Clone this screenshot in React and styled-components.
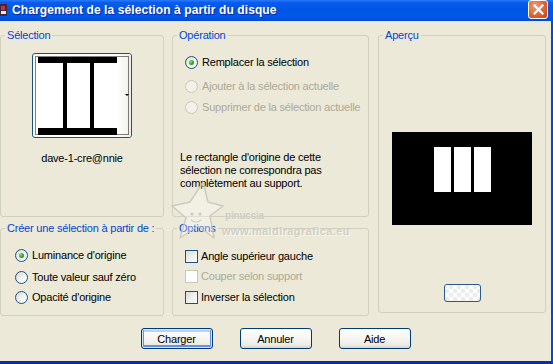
import React from 'react';
import styled, { createGlobalStyle } from 'styled-components';

const Global = createGlobalStyle`
  html, body { margin: 0; padding: 0; width: 553px; height: 364px; overflow: hidden; background: #ECE9D8; }
  body { font-family: "Liberation Sans", Arial, sans-serif; font-size: 11px; letter-spacing: -0.2px; color: #000; }
  #root { width: 553px; height: 364px; }
`;

const Window = styled.div`
  position: relative;
  width: 553px;
  height: 364px;
  display: flex;
  flex-direction: column;
  overflow: hidden;
`;

const TitleBar = styled.div`
  flex: none;
  height: 21px;
  box-sizing: border-box;
  padding: 0 5px 2px 0;
  display: flex;
  align-items: center;
  background: linear-gradient(180deg, #2A7BF8 0%, #0A5CEE 12%, #0054E3 45%, #0058EA 80%, #0047D0 100%);
`;

const TitleIcon = styled.svg`
  flex: none;
  width: 7px;
  height: 12px;
`;

const TitleText = styled.div`
  flex: 1;
  margin-left: 5px;
  color: #fff;
  font-weight: bold;
  font-size: 12px;
  letter-spacing: 0.1px;
  text-shadow: 1px 1px 0 #0A2C9C;
  white-space: nowrap;
`;

const CloseButton = styled.div`
  flex: none;
  width: 20px;
  height: 19px;
  margin-top: -1px;
  box-sizing: border-box;
  border: 1px solid #fff;
  border-radius: 3px;
  background: radial-gradient(circle at 35% 30%, #F29B7C 0%, #E4602F 55%, #C8431A 100%);
  display: flex;
  align-items: center;
  justify-content: center;
`;

const Body = styled.div`
  flex: 1;
  display: flex;
  flex-direction: column;
  background: #ECE9D8;
  border-right: 2px solid #0B45D8;
  border-bottom: 3px solid #0A2DB4;
  padding: 8px 0 0 0;
`;

const Columns = styled.div`
  display: grid;
  grid-template-columns: 164px 197px 169px;
  grid-template-rows: 188px 94px;
  column-gap: 8px;
  row-gap: 5px;
`;

const Group = styled.fieldset`
  margin: 0;
  margin-left: ${p => p.$ml || 0}px;
  margin-bottom: ${p => p.$mb || 0}px;
  padding: 0;
  min-width: 0;
  box-sizing: border-box;
  border: 1px solid #D0D0BF;
  border-radius: 3px;
  grid-column: ${p => p.$col};
  grid-row: ${p => p.$row};
`;

const Legend = styled.legend`
  color: #0046D5;
  line-height: 13px;
  padding: 0 2px;
  margin-left: 4px;
`;

const GroupBody = styled.div`
  display: flex;
  flex-direction: column;
  align-items: ${p => (p.$center ? 'center' : 'flex-start')};
  padding-left: ${p => p.$pl || 0}px;
`;

const Thumb = styled.div`
  margin-top: 11px;
  width: 100px;
  height: 85px;
  box-sizing: border-box;
  border: 1px solid #1C5180;
  border-radius: 3px;
  background: #fff;
  overflow: hidden;
`;

const Caption = styled.div`
  margin-top: 14px;
  line-height: 13px;
`;

const OptionRow = styled.div`
  display: flex;
  align-items: center;
  gap: ${p => p.$gap || 4}px;
  height: 16px;
  margin-top: ${p => p.$mt || 0}px;
  color: ${p => (p.$disabled ? '#ACA899' : '#000')};
  white-space: nowrap;
`;

const Radio = styled.span`
  flex: none;
  width: 13px;
  height: 13px;
  box-sizing: border-box;
  border-radius: 50%;
  border: 1px solid ${p => (p.$disabled ? '#CAC8BB' : '#1C5180')};
  background: ${p => (p.$disabled ? '#F3F1EA' : 'linear-gradient(135deg, #DCD9CD 0%, #F4F3EE 55%, #FFFFFF 100%)')};
  display: flex;
  align-items: center;
  justify-content: center;
  &::after {
    content: '';
    display: ${p => (p.$checked ? 'block' : 'none')};
    width: 5px;
    height: 5px;
    border-radius: 50%;
    background: radial-gradient(circle at 35% 35%, #7EE27E 0%, #21A121 60%, #1A7F1A 100%);
  }
`;

const Checkbox = styled.span`
  flex: none;
  width: 13px;
  height: 13px;
  box-sizing: border-box;
  border: 1px solid ${p => (p.$disabled ? '#CAC8BB' : '#1C5180')};
  background: ${p => (p.$disabled ? '#FFFFFF' : 'linear-gradient(135deg, #DCDCD7 0%, #F2F2EE 60%, #FFFFFF 100%)')};
`;

const Note = styled.p`
  margin: 36px 0 0 7px;
  line-height: 13px;
`;

const Preview = styled.svg`
  display: block;
  margin-top: 90px;
  width: 140px;
  height: 93px;
`;

const SwatchButton = styled.div`
  margin-top: 59px;
  width: 37px;
  height: 18px;
  box-sizing: border-box;
  border: 1px solid #2B5A8A;
  border-radius: 3px;
  background-color: #fff;
  background-image:
    linear-gradient(45deg, #ECECE8 25%, transparent 25%, transparent 75%, #ECECE8 75%),
    linear-gradient(45deg, #ECECE8 25%, transparent 25%, transparent 75%, #ECECE8 75%);
  background-size: 8px 8px;
  background-position: 0 0, 4px 4px;
`;

const ButtonRow = styled.div`
  display: flex;
  justify-content: center;
  gap: 27px;
  margin-top: 12px;
`;

const Button = styled.button`
  width: 72px;
  height: 21px;
  box-sizing: border-box;
  padding: 0;
  border: 1px solid #003C74;
  border-radius: 3px;
  background: linear-gradient(180deg, #FFFFFF 0%, #F6F5F0 50%, #ECEBE4 85%, #D6D0C5 100%);
  font-family: "Liberation Sans", Arial, sans-serif;
  font-size: 11px;
  letter-spacing: -0.2px;
  color: #000;
  box-shadow: ${p => (p.$default ? 'inset 0 0 0 1px #CEE7FF, inset 0 -1px 0 2px #6B8FE0, inset 0 1px 0 2px #B7D2F8' : 'none')};
`;

const Watermark = styled.div`
  position: absolute;
  left: 168px;
  top: 180px;
  width: 180px;
  height: 62px;
  pointer-events: none;
`;

const WmStar = styled.svg`
  position: absolute;
  left: 2px;
  top: 0;
  width: 54px;
  height: 62px;
`;

const WmName = styled.div`
  position: absolute;
  left: 57px;
  top: 30px;
  font-size: 10px;
  font-weight: bold;
  color: rgba(190, 187, 176, 0.75);
  text-shadow: 0 0 1px #F8F7F2;
`;

const WmUrl = styled.div`
  position: absolute;
  left: 54px;
  top: 45px;
  font-size: 11px;
  font-weight: bold;
  letter-spacing: 0.4px;
  color: rgba(196, 193, 182, 0.7);
  text-shadow: 1px 1px 0 rgba(255, 255, 255, 0.6);
  white-space: nowrap;
`;

export default function App() {
  return (
    <Window>
      <Global />
      <TitleBar>
        <TitleIcon viewBox="0 0 7 12">
          <rect x="0" y="0" width="7" height="12" fill="#3A2A40" />
          <rect x="1" y="2" width="4" height="4" fill="#D23030" />
          <rect x="1" y="7" width="5" height="3" fill="#F0E8E0" />
        </TitleIcon>
        <TitleText>Chargement de la sélection à partir du disque</TitleText>
        <CloseButton>
          <svg width="11" height="11" viewBox="0 0 11 11">
            <path d="M1.5 1.5 L9.5 9.5 M9.5 1.5 L1.5 9.5" stroke="#fff" strokeWidth="2.2" strokeLinecap="square" />
          </svg>
        </CloseButton>
      </TitleBar>
      <Body>
        <Columns>
          <Group $col="1" $row="1">
            <Legend>Sélection</Legend>
            <GroupBody $center>
              <Thumb>
                <svg width="98" height="83" viewBox="0 0 98 83">
                  <defs>
                    <linearGradient id="strip" x1="0" x2="1" y1="0" y2="0">
                      <stop offset="0" stopColor="#FFFFFF" />
                      <stop offset="1" stopColor="#EEEEE8" />
                    </linearGradient>
                  </defs>
                  <rect x="84" y="0" width="14" height="83" fill="url(#strip)" />
                  <rect x="2.5" y="2.5" width="93" height="78" fill="none" stroke="#000" strokeWidth="1" strokeDasharray="1 1" />
                  <rect x="5" y="3" width="79" height="6" fill="#000" />
                  <rect x="5" y="74" width="79" height="7" fill="#000" />
                  <rect x="30" y="9" width="4" height="65" fill="#000" />
                  <rect x="57" y="9" width="4" height="65" fill="#000" />
                  <path d="M92 40 L96 40 L94 42 Z" fill="#000" />
                </svg>
              </Thumb>
              <Caption>dave-1-cre@nnie</Caption>
            </GroupBody>
          </Group>

          <Group $col="2" $row="1">
            <Legend>Opération</Legend>
            <GroupBody $pl={12}>
              <OptionRow $mt={12}><Radio $checked />Remplacer la sélection</OptionRow>
              <OptionRow $mt={8} $disabled><Radio $disabled />Ajouter à la sélection actuelle</OptionRow>
              <OptionRow $mt={5} $disabled><Radio $disabled />Supprimer de la sélection actuelle</OptionRow>
            </GroupBody>
            <Note>
              Le rectangle d'origine de cette<br />
              sélection ne correspondra pas<br />
              complètement au support.
            </Note>
          </Group>

          <Group $col="3" $row="1 / span 2" $ml={1} $mb={3}>
            <Legend>Aperçu</Legend>
            <GroupBody $center>
              <Preview viewBox="0 0 140 93">
                <rect x="0" y="0" width="140" height="93" fill="#000" />
                <rect x="42" y="15" width="17" height="45" fill="#fff" />
                <rect x="62" y="15" width="17" height="45" fill="#fff" />
                <rect x="82" y="15" width="17" height="45" fill="#fff" />
              </Preview>
              <SwatchButton />
            </GroupBody>
          </Group>

          <Group $col="1" $row="2">
            <Legend>Créer une sélection à partir de :</Legend>
            <GroupBody $pl={14}>
              <OptionRow $mt={12}><Radio $checked />Luminance d'origine</OptionRow>
              <OptionRow $mt={6}><Radio />Toute valeur sauf zéro</OptionRow>
              <OptionRow $mt={4}><Radio />Opacité d'origine</OptionRow>
            </GroupBody>
          </Group>

          <Group $col="2" $row="2">
            <Legend>Options</Legend>
            <GroupBody $pl={12}>
              <OptionRow $mt={13} $gap={3}><Checkbox />Angle supérieur gauche</OptionRow>
              <OptionRow $mt={4} $gap={3} $disabled><Checkbox $disabled />Couper selon support</OptionRow>
              <OptionRow $mt={5} $gap={3}><Checkbox />Inverser la sélection</OptionRow>
            </GroupBody>
          </Group>
        </Columns>
        <ButtonRow>
          <Button $default>Charger</Button>
          <Button>Annuler</Button>
          <Button>Aide</Button>
        </ButtonRow>
      </Body>
      <Watermark>
        <WmStar viewBox="0 0 54 62">
          <path
            d="M33 2 L38 22 L53 26 L40 36 L44 58 L28 46 L10 58 L16 38 L2 26 L20 22 Z"
            fill="rgba(255,255,255,0.3)"
            stroke="rgba(200,197,186,0.85)"
            strokeWidth="1.5"
            strokeLinejoin="round"
          />
          <circle cx="22" cy="34" r="1.5" fill="rgba(200,197,186,0.9)" />
          <circle cx="30" cy="34" r="1.5" fill="rgba(200,197,186,0.9)" />
          <path d="M21 40 Q26 44 31 40" fill="none" stroke="rgba(200,197,186,0.9)" strokeWidth="1.2" />
        </WmStar>
        <WmName>pinuccia</WmName>
        <WmUrl>www.maidiragrafica.eu</WmUrl>
      </Watermark>
    </Window>
  );
}
